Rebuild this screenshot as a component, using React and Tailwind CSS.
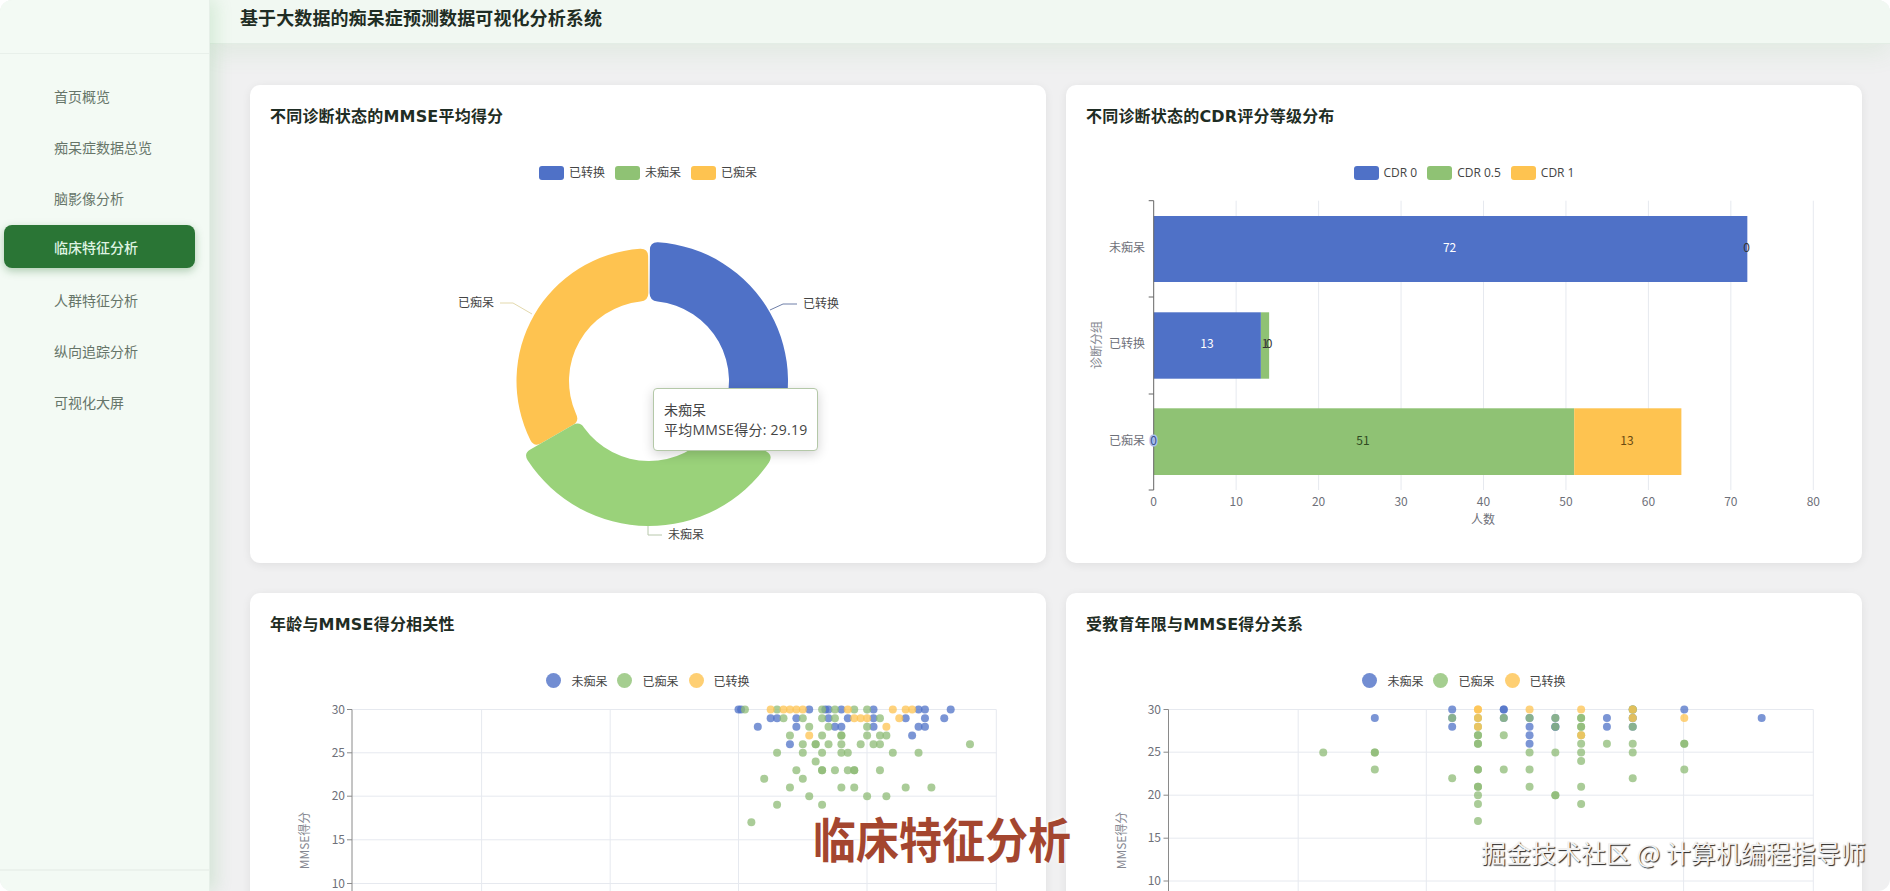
const CJK = '"Noto Sans CJK SC", "Noto Sans", sans-serif';
const TITLE_FONT = '"DejaVu Sans", "Noto Sans CJK SC", sans-serif';
const LATIN_FONT = '"Open Sans", "Noto Sans CJK SC", sans-serif';

const BLUE = '#4f71c7';
const GREEN = '#8fc274';
const ORANGE = '#fec350';

function polar(cx, cy, r, deg) {
  const a = (deg * Math.PI) / 180;
  return [cx + r * Math.sin(a), cy - r * Math.cos(a)];
}

function sector(cx, cy, r0, r1, a0, a1, c) {
  const fmt = (p) => `${p[0].toFixed(2)} ${p[1].toFixed(2)}`;
  const d1 = (c / r1) * (180 / Math.PI);
  const d0 = (c / r0) * (180 / Math.PI);
  const large1 = a1 - a0 - 2 * d1 > 180 ? 1 : 0;
  const large0 = a1 - a0 - 2 * d0 > 180 ? 1 : 0;
  return [
    `M${fmt(polar(cx, cy, r1 - c, a0))}`,
    `Q${fmt(polar(cx, cy, r1, a0))} ${fmt(polar(cx, cy, r1, a0 + d1))}`,
    `A${r1} ${r1} 0 ${large1} 1 ${fmt(polar(cx, cy, r1, a1 - d1))}`,
    `Q${fmt(polar(cx, cy, r1, a1))} ${fmt(polar(cx, cy, r1 - c, a1))}`,
    `L${fmt(polar(cx, cy, r0 + c, a1))}`,
    `Q${fmt(polar(cx, cy, r0, a1))} ${fmt(polar(cx, cy, r0, a1 - d0))}`,
    `A${r0} ${r0} 0 ${large0} 0 ${fmt(polar(cx, cy, r0, a0 + d0))}`,
    `Q${fmt(polar(cx, cy, r0, a0))} ${fmt(polar(cx, cy, r0 + c, a0))}`,
    'Z',
  ].join(' ');
}

const NAV = ['首页概览', '痴呆症数据总览', '脑影像分析', '临床特征分析', '人群特征分析', '纵向追踪分析', '可视化大屏'];

function Swatch({ color, label }) {
  return (
    <div className="flex items-center">
      <span className="h-[14px] w-[25px] rounded-[3px]" style={{ backgroundColor: color }} />
      <span className="ml-[5px] text-xs leading-[14px] text-[#444]" style={{ fontFamily: LATIN_FONT }}>{label}</span>
    </div>
  );
}

function Dot({ color, label }) {
  return (
    <div className="flex items-center">
      <span className="h-[15px] w-[15px] rounded-full opacity-80" style={{ backgroundColor: color }} />
      <span className="ml-[10px] text-xs leading-[14px] text-[#444]">{label}</span>
    </div>
  );
}

function Card({ title, legendClass, legend, children }) {
  return (
    <section className="relative h-[478.5px] rounded-[10px] bg-white px-5 pt-5 shadow-[0_2px_10px_rgba(0,0,0,0.07)]">
      <h3 className="text-base leading-6 font-bold tracking-[0.2px] text-[#1f2d24]" style={{ fontFamily: TITLE_FONT }}>{title}</h3>
      <div className={`flex justify-center ${legendClass}`}>{legend}</div>
      {children}
    </section>
  );
}

function Donut() {
  const cx = 649;
  const cy = 381;
  return (
    <svg viewBox="250 186 796 370" className="absolute top-[101.5px] left-0 h-[370px] w-[796px]" fontFamily={CJK} fontSize="12">
      <path d={sector(cx, cy, 80, 139, 0.4, 121, 8)} fill={BLUE} />
      <path d={sector(cx, cy, 80, 132.5, 240, 359.6, 8)} fill={ORANGE} />
      <path d={sector(cx, cy, 80, 145, 121, 240, 8)} fill="#9ad27a" />
      <polyline points="770,310 783,304 797,304" fill="none" stroke="#6f7fa8" strokeWidth="1" />
      <polyline points="532,314 513,303 500,303" fill="none" stroke="#e3d9ad" strokeWidth="1" />
      <polyline points="648,526 648,535 662,535" fill="none" stroke="#b8c8ac" strokeWidth="1" />
      <text x="803" y="308" fill="#444">已转换</text>
      <text x="458" y="307" fill="#444">已痴呆</text>
      <text x="668" y="539" fill="#444">未痴呆</text>
    </svg>
  );
}

function BarChart() {
  const x = (v) => 1153.7 + v * 8.245;
  const grid = [10, 20, 30, 40, 50, 60, 70, 80];
  return (
    <svg viewBox="1066 186 796 370" className="absolute top-[101.5px] left-0 h-[370px] w-[796px]" fontFamily={CJK} fontSize="12">
      {grid.map((v) => (
        <line key={v} x1={x(v)} x2={x(v)} y1="200.7" y2="490" stroke="#e6e9ef" strokeWidth="1" />
      ))}
      <rect x={x(0)} y="216" width={x(72) - x(0)} height="66" fill={BLUE} />
      <rect x={x(0)} y="312.3" width={x(13) - x(0)} height="66.4" fill={BLUE} />
      <rect x={x(13)} y="312.3" width={x(14) - x(13)} height="66.4" fill={GREEN} />
      <rect x={x(0)} y="408.3" width={x(51) - x(0)} height="66.7" fill={GREEN} />
      <rect x={x(51)} y="408.3" width={x(64) - x(51)} height="66.7" fill={ORANGE} />
      <line x1={x(0)} x2={x(0)} y1="200.7" y2="490" stroke="#666" strokeWidth="1" />
      {[200.7, 297, 394, 490].map((y) => (
        <line key={y} x1="1148.7" x2={x(0)} y1={y} y2={y} stroke="#666" strokeWidth="1" />
      ))}
      {[['未痴呆', 252], ['已转换', 348], ['已痴呆', 445]].map(([t, y]) => (
        <text key={t} x="1145" y={y} textAnchor="end" fill="#6e7079">{t}</text>
      ))}
      {[0, ...grid].map((v) => (
        <text key={v} x={x(v)} y="506" textAnchor="middle" fill="#6e7079">{v}</text>
      ))}
      <text x="1483" y="524" textAnchor="middle" fill="#6e7079">人数</text>
      <text transform="translate(1101 345) rotate(-90)" textAnchor="middle" fill="#858790">诊断分组</text>
      <text x="1449.6" y="252" textAnchor="middle" fill="#fff">72</text>
      <text x="1746.6" y="252" textAnchor="middle" fill="#333">0</text>
      <text x="1207" y="348" textAnchor="middle" fill="#fff">13</text>
      <text x="1265" y="348" textAnchor="middle" fill="#333">1</text>
      <text x="1269" y="348" textAnchor="middle" fill="#333">0</text>
      <text x="1363" y="445" textAnchor="middle" fill="#2f4a22">51</text>
      <text x="1627" y="445" textAnchor="middle" fill="#6b4a10">13</text>
      <text x="1153.7" y="445" textAnchor="middle" fill="#39508f" stroke="#a9c0ee" strokeWidth="3" paintOrder="stroke">0</text>
    </svg>
  );
}

function ScatterFrame({ x0, xs, ys, labelX, nameX, children, box }) {
  return (
    <svg viewBox={box} className="absolute top-[101.5px] left-0 h-[370px] w-[796px]" fontFamily={CJK} fontSize="12">
      {xs.map((v) => (
        <line key={v} x1={v} x2={v} y1="709" y2="960" stroke="#e6e9ef" strokeWidth="1" />
      ))}
      {ys.map((y) => (
        <line key={y} x1={x0} x2={xs[xs.length - 1]} y1={y} y2={y} stroke="#e6e9ef" strokeWidth="1" />
      ))}
      <line x1={x0} x2={x0} y1="709" y2="960" stroke="#8a8a8a" strokeWidth="1" />
      {ys.map((y, i) => (
        <g key={y}>
          <line x1={x0 - 5} x2={x0} y1={y} y2={y} stroke="#8a8a8a" strokeWidth="1" />
          <text x={labelX} y={y + 4} textAnchor="end" fill="#6e7079">{30 - i * 5}</text>
        </g>
      ))}
      <text transform={`translate(${nameX} 840) rotate(-90)`} textAnchor="middle" fill="#858790">MMSE得分</text>
      {children}
    </svg>
  );
}

const AGE_POINTS = {
  blue: [
    [30, [60, 60.4, 71, 73.5, 74, 76, 81, 88, 89, 93]],
    [29, [65, 66, 69, 74, 77, 81, 86, 89, 92]],
    [28, [63, 69, 75, 76, 81, 88, 89]],
    [27, [87]],
    [26, [68]],
  ],
  green: [
    [30, [61, 66, 73, 75, 78, 80]],
    [29, [67, 70, 73, 75, 82]],
    [28, [71, 74, 80]],
    [27, [68, 73, 76, 76, 80, 82, 83]],
    [26, [70, 72, 72, 74, 76, 79, 81, 82, 96]],
    [25, [66, 70, 73, 76, 77, 84, 88]],
    [24, [72]],
    [23, [69, 73, 73, 75, 77, 78, 78, 82]],
    [22, [64, 70]],
    [21, [68, 76, 78, 86, 90]],
    [20, [71, 80, 83]],
    [19, [66, 73]],
    [17, [62]],
  ],
  orange: [
    [30, [65, 67, 68, 69, 70, 77, 84, 86, 87]],
    [29, [78, 79, 80, 85]],
    [28, [83]],
    [27, [71]],
  ],
};

const EDU_POINTS = {
  blue: [
    [30, [11, 13, 13, 18, 20]],
    [29, [8, 11, 13, 14, 15, 17, 18, 23]],
    [28, [11, 14, 15, 15, 17, 18]],
    [27, [14]],
    [26, [14]],
  ],
  green: [
    [30, [18, 18]],
    [29, [11, 12, 13, 14, 15, 16, 16, 18]],
    [28, [12, 15, 16, 16, 18]],
    [27, [12, 12, 13, 16]],
    [26, [12, 12, 16, 17, 18, 20, 20]],
    [25, [6, 8, 8, 14, 15, 16, 18]],
    [24, [16]],
    [23, [8, 12, 12, 13, 14, 20]],
    [22, [11, 18]],
    [21, [12, 12, 14, 16]],
    [20, [12, 15, 15]],
    [19, [12, 16]],
    [17, [12]],
  ],
  orange: [
    [30, [12, 12, 14, 16, 18]],
    [29, [12, 18, 20]],
    [28, [12]],
    [27, [16]],
  ],
};

function Points({ data, px, py }) {
  const colors = { blue: BLUE, green: '#8dbb76', orange: ORANGE };
  return ['blue', 'green', 'orange'].map((k) =>
    data[k].flatMap(([score, list]) =>
      list.map((v, i) => (
        <circle key={`${k}-${score}-${v}-${i}`} cx={px(v)} cy={py(score)} r="4" fill={colors[k]} opacity="0.75" />
      )),
    ),
  );
}

export default function App() {
  return (
    <div className="relative flex h-[891px] w-full overflow-hidden rounded-xl bg-[#f0f0f1]" style={{ fontFamily: CJK }}>
      <aside className="relative z-20 flex h-full w-[210px] shrink-0 flex-col border-r border-[#e6efe8] bg-[#f3faf4] shadow-[6px_0_16px_rgba(76,175,80,0.16)]">
        <div className="h-[54px] shrink-0 border-b border-[#e8f0ea]" />
        <nav className="flex flex-1 flex-col gap-2 pt-[20px]">
          {NAV.map((item, i) =>
            i === 3 ? (
              <a key={item} className="mx-1 -mt-0.5 flex h-[43px] w-[191px] items-center rounded-lg bg-[#2a7535] pl-[50px] text-sm font-medium text-[#dff3e2] shadow-[0_3px_8px_rgba(42,117,53,0.35)]">
                {item}
              </a>
            ) : (
              <a key={item} className={`flex h-[43px] items-center pl-[54px] text-sm text-[#667569] ${i === 4 ? 'mt-0.5' : ''}`}>
                {item}
              </a>
            ),
          )}
        </nav>
        <div className="h-[22px] shrink-0 border-t-2 border-[#ebf2ec]" />
      </aside>

      <main className="relative flex min-w-0 flex-1 flex-col">
        <header className="relative z-10 flex h-[44px] shrink-0 items-start border-b border-[#e3ede5] bg-[#f1f8f2] pt-[4px] pl-[30px] shadow-[0_10px_24px_rgba(76,175,80,0.09)]">
          <h1 className="text-lg leading-[26px] font-bold tracking-[0.1px] text-[#1f2d24]">基于大数据的痴呆症预测数据可视化分析系统</h1>
        </header>
        <div className="grid flex-1 grid-cols-2 content-start gap-x-5 gap-y-[30px] overflow-hidden pt-[40.5px] pr-7 pl-10">
          <Card
            title="不同诊断状态的MMSE平均得分"
            legendClass="mt-[37px] gap-[10px]"
            legend={<><Swatch color={BLUE} label="已转换" /><Swatch color={GREEN} label="未痴呆" /><Swatch color={ORANGE} label="已痴呆" /></>}
          >
            <Donut />
            <div className="absolute top-[303.5px] left-[403px] h-[63px] w-[165px] rounded border border-[#b4c8a8] bg-white pt-[11px] pl-[10px] text-sm leading-[20px] text-[#444] shadow-[0_3px_12px_rgba(0,0,0,0.18)]" style={{ fontFamily: LATIN_FONT }}>
              <div>未痴呆</div>
              <div className="tracking-[0.25px]">平均MMSE得分: 29.19</div>
            </div>
          </Card>
          <Card
            title="不同诊断状态的CDR评分等级分布"
            legendClass="mt-[37px] gap-[10px]"
            legend={<><Swatch color={BLUE} label="CDR 0" /><Swatch color={GREEN} label="CDR 0.5" /><Swatch color={ORANGE} label="CDR 1" /></>}
          >
            <BarChart />
          </Card>
          <Card
            title="年龄与MMSE得分相关性"
            legendClass="mt-[36px] gap-[10px]"
            legend={<><Dot color={BLUE} label="未痴呆" /><Dot color={GREEN} label="已痴呆" /><Dot color={ORANGE} label="已转换" /></>}
          >
            <ScatterFrame box="250 694.5 796 370" x0={352} xs={[481.6, 610.2, 738.5, 867, 996.3]} ys={[709, 752.3, 795.7, 839.3, 883]} labelX={345} nameX={309}>
              <Points data={AGE_POINTS} px={(v) => 738.5 + (v - 60) * 6.43} py={(s) => 709 + (30 - s) * 8.67} />
            </ScatterFrame>
          </Card>
          <Card
            title="受教育年限与MMSE得分关系"
            legendClass="mt-[36px] gap-[10px]"
            legend={<><Dot color={BLUE} label="未痴呆" /><Dot color={GREEN} label="已痴呆" /><Dot color={ORANGE} label="已转换" /></>}
          >
            <ScatterFrame box="1066 694.5 796 370" x0={1168.5} xs={[1298.2, 1426.3, 1555, 1683.6, 1813.3]} ys={[709, 751.7, 794.7, 837.7, 880.5]} labelX={1161} nameX={1126}>
              <Points data={EDU_POINTS} px={(v) => 1168.5 + v * 25.79} py={(s) => 709 + (30 - s) * 8.58} />
            </ScatterFrame>
          </Card>
        </div>
      </main>

      <div className="absolute top-[809px] left-[813px] z-30 scale-y-[1.1] text-[43px] leading-[56px] font-bold text-[#a4462f] [text-shadow:0_0_4px_#fff]">
        临床特征分析
      </div>
      <div className="absolute top-[834px] left-[1481px] z-30 text-[25px] leading-[36px] whitespace-nowrap text-[#f2f2f2] [text-shadow:1px_1px_1px_#222]">
        掘金技术社区 @ 计算机编程指导师
      </div>
    </div>
  );
}
